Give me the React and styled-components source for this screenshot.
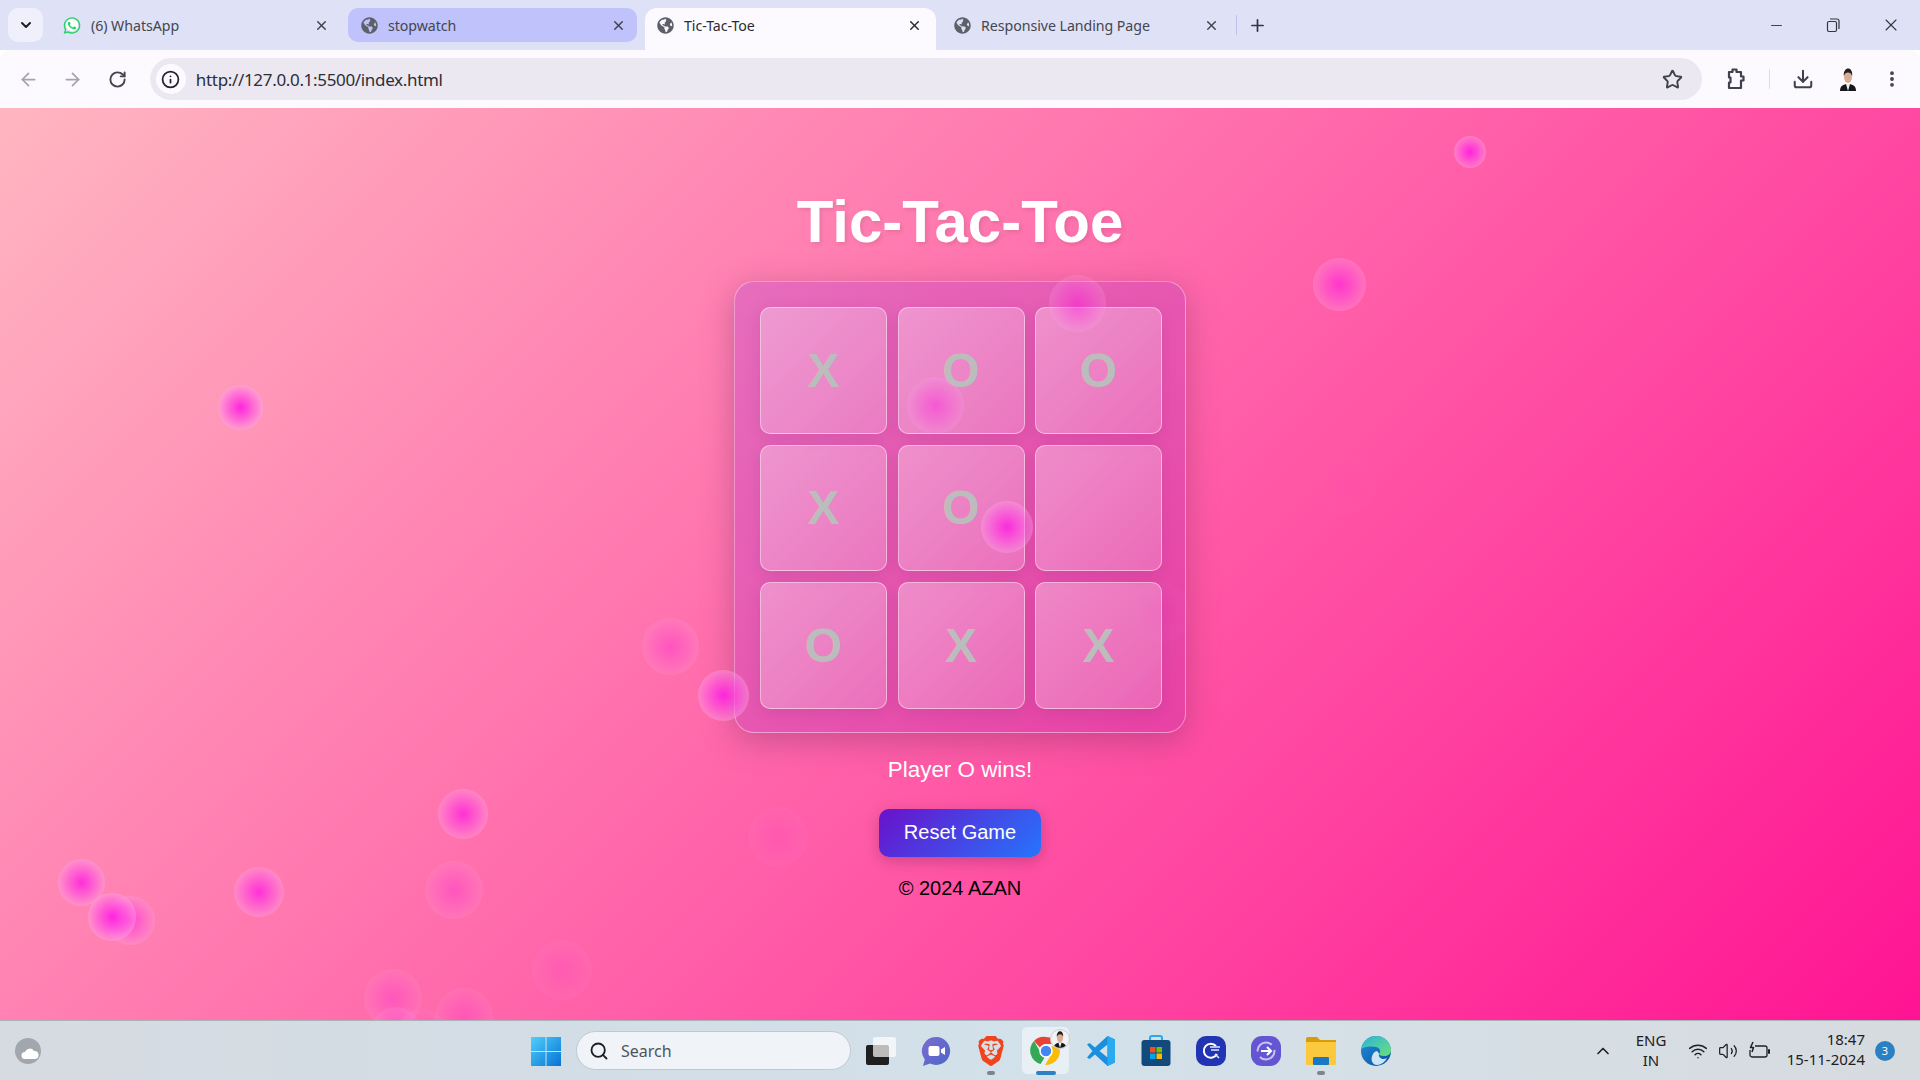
import React from 'react'
import styled, { createGlobalStyle } from 'styled-components'
import {
  ArrowLeft, ArrowRight, RotateCw, Info, Star, Download, EllipsisVertical,
  X, Plus, Minus, ChevronDown, ChevronUp, Search, Wifi, Volume2,
} from 'lucide-react'
import { FaGlobeAmericas, FaWhatsapp } from 'react-icons/fa'
import { SiBrave } from 'react-icons/si'

const GlobalStyle = createGlobalStyle`
  html, body { margin: 0; padding: 0; height: 100%; overflow: hidden; }
  body { font-family: "Liberation Sans", Arial, sans-serif; }
  * { box-sizing: border-box; }
`

const Screen = styled.div`
  width: 1920px;
  height: 1080px;
  display: flex;
  flex-direction: column;
  overflow: hidden;
`

/* browser chrome */
const TabStrip = styled.div`
  height: 50px;
  flex: none;
  display: flex;
  align-items: flex-start;
  background: #dfe1f7;
  padding: 8px 0 0 8px;
  color: #3f414d;
`
const TabMenu = styled.div`
  width: 35px;
  height: 34px;
  margin-right: 8px;
  border-radius: 10px;
  background: #eff0fb;
  display: flex;
  align-items: center;
  justify-content: center;
  color: #1f2026;
`
const Tab = styled.div`
  width: ${props => props.$active ? '291px' : '289px'};
  height: ${props => props.$active ? '42px' : '34px'};
  margin-right: ${props => props.$active ? '5px' : '8px'};
  padding: 0 ${props => props.$active ? '14px' : '11px'} 0 ${props => props.$active ? '11px' : '12px'};
  display: flex;
  align-items: center;
  gap: 10px;
  font-family: "Noto Sans", sans-serif;
  font-size: 14.2px;
  letter-spacing: -0.05px;
  color: ${props => props.$active ? '#2b2c33' : '#44464f'};
  border-radius: ${props => props.$active ? '12px 12px 0 0' : '10px'};
  background: ${props => props.$active ? '#fdfaff' : props.$hover ? '#bfc2fb' : 'transparent'};
  padding-bottom: ${props => props.$active ? '8px' : '0'};
`
const TabTitle = styled.span`
  flex: 1;
  white-space: nowrap;
`
const Favicon = styled.span`
  width: 18px;
  height: 18px;
  display: flex;
  align-items: center;
  justify-content: center;
  position: relative;
  color: #5d6068;
`
const WhiteDot = styled.span`
  position: absolute;
  inset: 3px;
  border-radius: 50%;
  background: #fff;
`
const TabDivider = styled.div`
  width: 1px;
  height: 20px;
  margin: 7px 11px 0 -2px;
  background: #bfc2ec;
`
const NewTab = styled.div`
  height: 34px;
  display: flex;
  align-items: center;
  color: #34353d;
`
const WindowControls = styled.div`
  margin-left: auto;
  height: 34px;
  display: flex;
  align-items: center;
  gap: 40px;
  padding-right: 19px;
  color: #33343c;
`

const Toolbar = styled.div`
  height: 58px;
  flex: none;
  display: flex;
  align-items: center;
  background: #fdfaff;
  border-radius: 10px 10px 0 0;
  padding: 0 18px;
  color: #3f414d;
`
const NavButton = styled.span`
  width: ${props => props.$width || 44}px;
  display: flex;
  align-items: center;
  color: ${props => props.$muted ? '#a3a4ad' : '#44464f'};
`
const Omnibox = styled.div`
  width: 1554px;
  height: 42px;
  margin-left: -1px;
  padding: 0 19px 0 6px;
  border-radius: 21px;
  background: #ebe8f1;
  display: flex;
  align-items: center;
  gap: 10px;
`
const InfoChip = styled.span`
  width: 30px;
  height: 30px;
  border-radius: 50%;
  background: #fdfaff;
  display: flex;
  align-items: center;
  justify-content: center;
  color: #22232a;
`
const Url = styled.span`
  flex: 1;
  font-family: "Noto Sans", sans-serif;
  font-size: 17px;
  letter-spacing: -0.33px;
  color: #2d2e36;
`
const ToolIcons = styled.div`
  display: flex;
  align-items: center;
  margin-left: 21px;
  gap: 22px;
`
const ToolDivider = styled.span`
  width: 1px;
  height: 20px;
  background: #dcdcea;
`

/* the page itself */
const Page = styled.main`
  flex: 1;
  position: relative;
  overflow: hidden;
  display: flex;
  flex-direction: column;
  align-items: center;
  padding-top: 80px;
  background: linear-gradient(135deg, #ffb6c1 0%, #ff1493 100%);
`
const Title = styled.h1`
  margin: 0;
  font-size: 60px;
  line-height: 68px;
  font-weight: 700;
  color: #fff;
  text-shadow: 2px 2px 4px rgba(0, 0, 0, 0.1);
`
const Board = styled.div`
  width: 452px;
  height: 452px;
  margin-top: 25px;
  padding: 25px 0 0 25px;
  display: grid;
  grid-template-columns: repeat(3, 127px);
  grid-template-rows: repeat(3, 126.5px);
  gap: 11px 10.5px;
  border-radius: 20px;
  border: 1px solid rgba(255, 255, 255, 0.38);
  background: linear-gradient(135deg, rgba(224, 104, 192, 0.8), rgba(226, 62, 164, 0.8));
  box-shadow: 0 8px 32px rgba(100, 40, 90, 0.35);
`
const Cell = styled.div`
  display: flex;
  align-items: center;
  justify-content: center;
  border-radius: 10px;
  border: 1px solid rgba(255, 255, 255, 0.45);
  background: linear-gradient(135deg, rgba(255, 255, 255, 0.32), rgba(255, 255, 255, 0.18));
  box-shadow: 0 4px 15px rgba(100, 30, 100, 0.14);
  font-size: 48px;
  font-weight: 700;
  color: #bcbcbc;
`
const Status = styled.p`
  margin: 23px 0 0;
  font-size: 22.4px;
  line-height: 28px;
  color: #fff;
`
const ResetButton = styled.button`
  width: 162px;
  height: 48px;
  margin-top: 25px;
  border: none;
  border-radius: 10px;
  background: linear-gradient(135deg, #6a11cb 0%, #2575fc 100%);
  box-shadow: 0 4px 15px rgba(0, 0, 0, 0.2);
  font-family: inherit;
  font-size: 20px;
  line-height: 44px;
  padding: 0 0 2px;
  color: #fff;
`
const Footer = styled.footer`
  margin-top: 19px;
  font-size: 20px;
  line-height: 24px;
  color: #000;
`
const Bubble = styled.span`
  position: absolute;
  left: ${props => props.$x - props.$d / 2}px;
  top: ${props => props.$y - 108 - props.$d / 2}px;
  width: ${props => props.$d}px;
  height: ${props => props.$d}px;
  border-radius: 50%;
  opacity: ${props => props.$o};
  background: radial-gradient(circle closest-side, rgba(255, 30, 225, 0.94) 0%, rgba(255, 170, 240, 0.4) 100%);
  pointer-events: none;
`

/* windows taskbar */
const Taskbar = styled.div`
  height: 60px;
  flex: none;
  display: flex;
  align-items: center;
  border-top: 1px solid #aab1b7;
  background: linear-gradient(90deg, #d6dbe1 0%, #d3dde5 30%, #d2e1ea 55%, #d6dee4 80%, #d6dbe0 100%);
`
const WeatherSlot = styled.div`
  width: 522px;
  padding-left: 13px;
  display: flex;
  align-items: center;
`
const CenterIcons = styled.div`
  display: flex;
  align-items: center;
`
const SearchPill = styled.div`
  width: 275px;
  height: 39px;
  margin: 0 2px 0 6px;
  padding-left: 12px;
  border-radius: 20px;
  border: 1px solid #bfc9d2;
  background: #f0f4f8;
  display: flex;
  align-items: center;
  gap: 12px;
  font-family: "Noto Sans", sans-serif;
  font-size: 16px;
  color: #50535a;
`
const TaskIcon = styled.span`
  width: ${props => props.$width || 55}px;
  height: 49px;
  display: flex;
  align-items: center;
  justify-content: center;
  position: relative;
`
const ActiveBack = styled.span`
  position: absolute;
  left: 4px;
  right: 4px;
  top: 1px;
  bottom: 1px;
  border-radius: 5px;
  background: #e8eff5;
`
const ChromeStack = styled.span`
  position: relative;
  display: flex;
`
const ProfileBadge = styled.span`
  position: absolute;
  top: -6px;
  right: -8px;
  width: 20px;
  height: 20px;
  border-radius: 50%;
  overflow: hidden;
  background: #f3f3f3;
  border: 1px solid #c9cdd2;
  display: flex;
  align-items: center;
  justify-content: center;
`
const RunDot = styled.span`
  position: absolute;
  bottom: 0;
  left: 50%;
  height: 4px;
  width: ${props => props.$active ? '20px' : '8px'};
  margin-left: ${props => props.$active ? '-10px' : '-4px'};
  border-radius: 2px;
  background: ${props => props.$active ? '#2f80c0' : '#7d848b'};
`
const Tray = styled.div`
  margin-left: auto;
  display: flex;
  align-items: center;
  color: #1e2023;
  padding-right: 25px;
`
const LangBox = styled.div`
  width: 44px;
  margin: 0 15px 0 16px;
  padding-bottom: 2px;
  text-align: center;
  font-family: "Noto Sans", sans-serif;
  font-size: 15px;
  line-height: 20px;
`
const TrayIcons = styled.div`
  display: flex;
  align-items: center;
  gap: 10px;
`
const Clock = styled.div`
  width: 86px;
  margin-left: 9px;
  padding-bottom: 4px;
  text-align: right;
  font-family: "Noto Sans", sans-serif;
  font-size: 15px;
  line-height: 20px;
`
const Badge = styled.span`
  width: 20px;
  height: 20px;
  margin-left: 10px;
  border-radius: 50%;
  background: #2a80c2;
  color: #fff;
  font-family: "Noto Sans", sans-serif;
  font-size: 11px;
  display: flex;
  align-items: center;
  justify-content: center;
`

const BOARD = ['X', 'O', 'O', 'X', 'O', '', 'O', 'X', 'X']

const BUBBLES = [
  [1470, 152, 32, 1], [1339, 284, 53, 0.68], [240, 407, 45, 1], [1077, 303, 57, 0.5],
  [935, 405, 57, 0.45], [1007, 527, 52, 0.9], [670, 646, 57, 0.38], [723, 695, 51, 0.95],
  [778, 837, 60, 0.13], [463, 814, 50, 0.82], [454, 890, 58, 0.35], [81, 882, 47, 0.9],
  [130, 920, 49, 0.62], [112, 917, 48, 1], [259, 892, 50, 0.85], [562, 970, 60, 0.14],
  [393, 998, 58, 0.3], [464, 1017, 58, 0.25], [396, 1032, 50, 0.35], [422, 1034, 50, 0.2],
  [1347, 484, 60, 0.04], [1160, 612, 60, 0.06],
]

const Avatar = ({ size = 24 }) => (
  <svg width={size} height={size} viewBox="0 0 24 24">
    <path d="M4 24c0-5 3-7 8-7s8 2 8 7z" fill="#15171c" />
    <path d="M10 17h4l-2 7z" fill="#f2f2f2" />
    <ellipse cx="12" cy="10" rx="4" ry="6" fill="#d9ad93" />
    <path d="M7.800 9c-.5-5 2-7.500 4.400-7.500S16.700 4 16.200 9c-1-2.500-2.200-3.500-4.200-3.500S8.800 6.500 7.800 9z" fill="#22201f" />
  </svg>
)

const ExtensionIcon = () => (
  <svg width="24" height="24" viewBox="0 0 24 24" fill="none" stroke="currentColor" strokeWidth="2.200" strokeLinejoin="round">
    <path d="M6 5h3.500V2.500h4V5H18v4.500h2.500v4H18V21H6v-5.500h1.500v-5H6z" />
  </svg>
)

const RestoreIcon = () => (
  <svg width="16" height="16" viewBox="0 0 16 16" fill="none" stroke="currentColor" strokeWidth="1.200">
    <rect x="2.500" y="4.500" width="9" height="10" rx="1.500" />
    <path d="M5 2h7a2 2 0 0 1 2 2v8" />
  </svg>
)

const BatteryIcon = () => (
  <svg width="22" height="20" viewBox="0 0 22 20" fill="none" stroke="currentColor" strokeWidth="1.300">
    <path d="M7 5h10a2 2 0 0 1 2 2v7a2 2 0 0 1-2 2H4a2 2 0 0 1-2-2V9" />
    <path d="M20 9h1.500v3H20" fill="currentColor" />
    <path d="M5 1L2.500 6.500h3L4 11" strokeWidth="1.500" strokeLinejoin="round" />
  </svg>
)

const WindowsLogo = () => (
  <svg width="32" height="30" viewBox="0 0 32 30">
    <defs>
      <linearGradient id="win" x1="0" y1="0" x2="1" y2="1">
        <stop offset="0" stopColor="#4fd0fb" />
        <stop offset="1" stopColor="#0672d6" />
      </linearGradient>
    </defs>
    <path d="M1 1h14.500v14H1zM16.500 1H31v14H16.500zM1 16h14.500v14H1zM16.500 16H31v14H16.500z" fill="url(#win)" />
  </svg>
)

const WeatherIcon = () => (
  <svg width="30" height="30" viewBox="0 0 30 30">
    <circle cx="15" cy="15" r="13" fill="#a2a7ad" />
    <path d="M15 2a13 13 0 0 1 8 23 13 13 0 0 0 -8-23z" fill="#62676e" />
    <path d="M12 23a3.500 3.500 0 0 1 0-7 5 5 0 0 1 9-1 4 4 0 0 1 1 8z" fill="#fff" />
  </svg>
)

const StackIcon = () => (
  <svg width="32" height="32" viewBox="0 0 32 32">
    <rect x="1" y="10" width="23" height="20" rx="2" fill="#1f1f1f" />
    <rect x="8" y="2" width="23" height="20" rx="2" fill="#fff" fillOpacity="0.7" />
  </svg>
)

const MeetIcon = () => (
  <svg width="32" height="32" viewBox="0 0 32 32">
    <defs>
      <linearGradient id="meet" x1="0" y1="0" x2="1" y2="1">
        <stop offset="0" stopColor="#7d6bd0" />
        <stop offset="1" stopColor="#4a68c8" />
      </linearGradient>
    </defs>
    <path d="M16 2a14 14 0 1 1-6 26.600L3 31l1.800-6.500A14 14 0 0 1 16 2z" fill="url(#meet)" />
    <rect x="8.500" y="11" width="11" height="10" rx="2" fill="#fff" />
    <path d="M21 14.500l4-2.500v8l-4-2.500z" fill="#fff" />
  </svg>
)

const ChromeIcon = () => (
  <svg width="32" height="32" viewBox="0 0 32 32">
    <path d="M16 2a14 14 0 0 1 12.100 7H16a7 7 0 0 0-6.100 3.500L4 5.900A14 14 0 0 1 16 2z" fill="#ea4335" />
    <path d="M4 5.900l6 10.600a7 7 0 0 0 4.500 6.300L10.500 29A14 14 0 0 1 4 5.900z" fill="#34a853" />
    <path d="M28.100 9A14 14 0 0 1 16 30h-1l5.500-9a7 7 0 0 0 .5-9z" fill="#fbbc04" />
    <circle cx="16" cy="16" r="6" fill="#4285f4" stroke="#fff" strokeWidth="1.500" />
  </svg>
)

const CodeIcon = () => (
  <svg width="30" height="32" viewBox="0 0 30 32">
    <path d="M21.500 1L29 4.500v23L21.500 31 9 19.500 3.500 24 1 22.500 6.500 16 1 9.500 3.500 8 9 12.500z M21.500 9.500L13.500 16l8 6.500z" fill="#1a8fe0" fillRule="evenodd" />
    <path d="M21.500 1L29 4.500v23L21.500 31z" fill="#27aaf0" />
  </svg>
)

const StoreIcon = () => (
  <svg width="30" height="32" viewBox="0 0 30 32">
    <path d="M9 6V3a2 2 0 0 1 2-2h8a2 2 0 0 1 2 2v3" fill="none" stroke="#2aa8e8" strokeWidth="2" />
    <rect x="0.500" y="5" width="29" height="26" rx="3" fill="#124a7e" />
    <rect x="9" y="12" width="5.500" height="5.500" fill="#f25022" />
    <rect x="15.500" y="12" width="5.500" height="5.500" fill="#7fba00" />
    <rect x="9" y="18.500" width="5.500" height="5.500" fill="#00a4ef" />
    <rect x="15.500" y="18.500" width="5.500" height="5.500" fill="#ffb900" />
  </svg>
)

const QuickIcon = () => (
  <svg width="30" height="30" viewBox="0 0 30 30">
    <rect width="30" height="30" rx="10" fill="#2135b4" />
    <path d="M20 10a7 7 0 1 0 1 8" fill="none" stroke="#fff" strokeWidth="2" />
    <path d="M14 11h10M15 14h8M19 18l4 4" stroke="#dfe6ff" strokeWidth="1.600" fill="none" />
  </svg>
)

const ShareIcon = () => (
  <svg width="30" height="30" viewBox="0 0 30 30">
    <rect width="30" height="30" rx="11" fill="#6456d2" />
    <circle cx="15" cy="15" r="8.500" fill="none" stroke="#c9c2f3" strokeWidth="2" strokeDasharray="20 6" />
    <path d="M10 15h10M16 11l4 4-4 4" fill="none" stroke="#fff" strokeWidth="2" />
  </svg>
)

const FolderIcon = () => (
  <svg width="32" height="30" viewBox="0 0 32 30">
    <path d="M1 3a2 2 0 0 1 2-2h9l3 3h16v5H1z" fill="#d99a0c" />
    <rect x="1" y="6" width="30" height="23" rx="1" fill="#fbc93d" />
    <rect x="8" y="21" width="16" height="8" rx="1" fill="#1c78c4" />
  </svg>
)

const EdgeIcon = () => (
  <svg width="32" height="32" viewBox="0 0 32 32">
    <defs>
      <linearGradient id="edgeTop" x1="0" y1="0" x2="1" y2="1">
        <stop offset="0" stopColor="#2cb3d8" />
        <stop offset="1" stopColor="#6be07a" />
      </linearGradient>
      <linearGradient id="edgeLow" x1="0" y1="0" x2="1" y2="1">
        <stop offset="0" stopColor="#1f8fdc" />
        <stop offset="1" stopColor="#0c4f9e" />
      </linearGradient>
    </defs>
    <circle cx="16" cy="16" r="15" fill="url(#edgeLow)" />
    <path d="M1.500 14C3 6 9 1 16 1c9 0 15 6.500 15 14 0 4-3 6-7 6-3 0-5-1-5-2 2-2 1.500-6-3-7-6-1.500-12.500 0-14.500 2z" fill="url(#edgeTop)" />
    <path d="M19 19c-1 3 3 7 8 4-2 4-6 7-10 7-5 0-7-6-4-11 1-2 3-3 4-3 1 1 2 2 2 3z" fill="#dff3fb" fillOpacity="0.9" />
  </svg>
)

const TabItem = ({ title, active, hover, whatsapp }) => (
  <Tab $active={active} $hover={hover}>
    <Favicon>
      {whatsapp ? (
        <>
          <WhiteDot />
          <FaWhatsapp size={19} color="#25d366" style={{ position: 'relative' }} />
        </>
      ) : (
        <FaGlobeAmericas size={17} />
      )}
    </Favicon>
    <TabTitle>{title}</TabTitle>
    <X size={15} strokeWidth={2.4} />
  </Tab>
)

export default function App() {
  return (
    <Screen>
      <GlobalStyle />
      <TabStrip>
        <TabMenu><ChevronDown size={16} strokeWidth={3} /></TabMenu>
        <TabItem title="(6) WhatsApp" whatsapp />
        <TabItem title="stopwatch" hover />
        <TabItem title="Tic-Tac-Toe" active />
        <TabItem title="Responsive Landing Page" />
        <TabDivider />
        <NewTab><Plus size={19} strokeWidth={2.2} /></NewTab>
        <WindowControls>
          <Minus size={17} strokeWidth={1.3} />
          <RestoreIcon />
          <X size={20} strokeWidth={1.3} />
        </WindowControls>
      </TabStrip>
      <Toolbar>
        <NavButton $muted><ArrowLeft size={21} strokeWidth={2} /></NavButton>
        <NavButton $muted $width={46}><ArrowRight size={21} strokeWidth={2} /></NavButton>
        <NavButton $width={43}><RotateCw size={19} strokeWidth={2.4} /></NavButton>
        <Omnibox>
          <InfoChip><Info size={19} strokeWidth={2.2} /></InfoChip>
          <Url>http://127.0.0.1:5500/index.html</Url>
          <Star size={21} strokeWidth={2.2} />
        </Omnibox>
        <ToolIcons>
          <ExtensionIcon />
          <ToolDivider />
          <Download size={22} strokeWidth={2.2} />
          <Avatar size={24} />
          <EllipsisVertical size={20} strokeWidth={2.6} />
        </ToolIcons>
      </Toolbar>
      <Page>
        <Title>Tic-Tac-Toe</Title>
        <Board>
          {BOARD.map((mark, i) => <Cell key={i}>{mark}</Cell>)}
        </Board>
        <Status>Player O wins!</Status>
        <ResetButton>Reset Game</ResetButton>
        <Footer>© 2024 AZAN</Footer>
        {BUBBLES.map(([x, y, d, o], i) => <Bubble key={i} $x={x} $y={y} $d={d} $o={o} />)}
      </Page>
      <Taskbar>
        <WeatherSlot><WeatherIcon /></WeatherSlot>
        <CenterIcons>
          <TaskIcon $width={48}><WindowsLogo /></TaskIcon>
          <SearchPill><Search size={20} strokeWidth={2.2} color="#1c1e22" />Search</SearchPill>
          <TaskIcon><StackIcon /></TaskIcon>
          <TaskIcon><MeetIcon /></TaskIcon>
          <TaskIcon>
            <SiBrave size={30} color="#f1441d" />
            <RunDot />
          </TaskIcon>
          <TaskIcon>
            <ActiveBack />
            <ChromeStack>
              <ChromeIcon />
              <ProfileBadge><Avatar size={18} /></ProfileBadge>
            </ChromeStack>
            <RunDot $active />
          </TaskIcon>
          <TaskIcon><CodeIcon /></TaskIcon>
          <TaskIcon><StoreIcon /></TaskIcon>
          <TaskIcon><QuickIcon /></TaskIcon>
          <TaskIcon><ShareIcon /></TaskIcon>
          <TaskIcon>
            <FolderIcon />
            <RunDot />
          </TaskIcon>
          <TaskIcon><EdgeIcon /></TaskIcon>
        </CenterIcons>
        <Tray>
          <ChevronUp size={20} strokeWidth={2} />
          <LangBox>ENG<br />IN</LangBox>
          <TrayIcons>
            <Wifi size={20} strokeWidth={1.8} />
            <Volume2 size={20} strokeWidth={1.5} />
            <BatteryIcon />
          </TrayIcons>
          <Clock>18:47<br />15-11-2024</Clock>
          <Badge>3</Badge>
        </Tray>
      </Taskbar>
    </Screen>
  )
}
